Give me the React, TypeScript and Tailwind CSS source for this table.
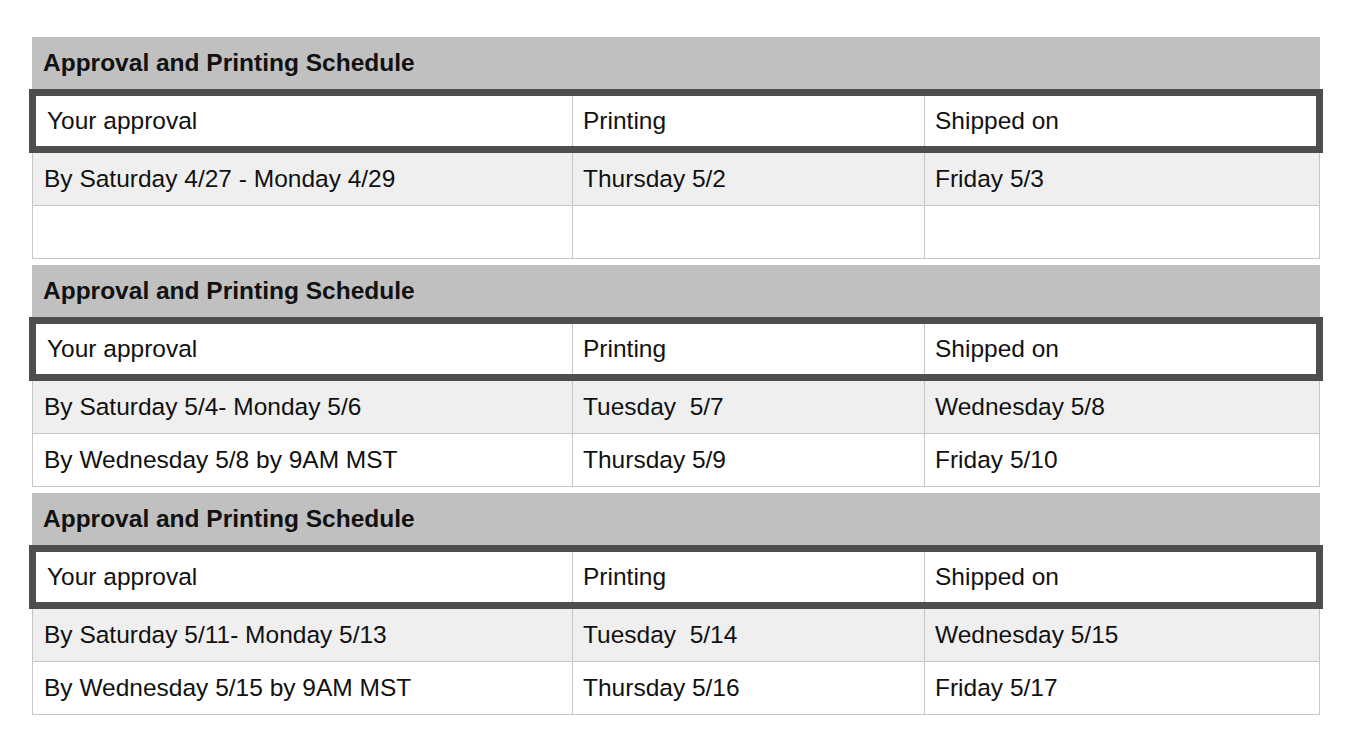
const tables: string[][][] = [
  [
    ["By Saturday 4/27 - Monday 4/29", "Thursday 5/2", "Friday 5/3"],
    ["", "", ""],
  ],
  [
    ["By Saturday 5/4- Monday 5/6", "Tuesday  5/7", "Wednesday 5/8"],
    ["By Wednesday 5/8 by 9AM MST", "Thursday 5/9", "Friday 5/10"],
  ],
  [
    ["By Saturday 5/11- Monday 5/13", "Tuesday  5/14", "Wednesday 5/15"],
    ["By Wednesday 5/15 by 9AM MST", "Thursday 5/16", "Friday 5/17"],
  ],
];

function Schedule({ rows }: { rows: string[][] }) {
  return (
    <div className="w-[1288px]">
      <div className="flex h-[52px] items-center bg-[#bfc0bf] px-[11px] font-bold">
        Approval and Printing Schedule
      </div>
      {/* column heads, framed by the thick dark border */}
      <div className="relative z-10 -mx-[3px] flex h-[64px] border-[7px] border-[#4e4e4e] bg-white">
        <div className="flex w-[536px] flex-none items-center pl-[11px]">Your approval</div>
        <div className="flex w-[352px] flex-none items-center border-l border-[#c6c6c6] pl-[10px]">Printing</div>
        <div className="flex flex-1 items-center border-l border-[#c6c6c6] pl-[10px]">Shipped on</div>
      </div>
      {rows.map((r, i) => (
        <div
          key={i}
          className={
            "flex h-[53px] border-x border-b border-[#c6c6c6] " + (i === 0 ? "bg-[#efefef]" : "bg-white")
          }
        >
          <div className="flex w-[539px] flex-none items-center whitespace-pre pl-[11px]">{r[0]}</div>
          <div className="flex w-[352px] flex-none items-center whitespace-pre border-l border-[#c6c6c6] pl-[10px]">{r[1]}</div>
          <div className="flex flex-1 items-center whitespace-pre border-l border-[#c6c6c6] pl-[10px]">{r[2]}</div>
        </div>
      ))}
    </div>
  );
}

export default function App() {
  return (
    <div className="h-[740px] w-[1370px] bg-white pl-[32px] pt-[37px] font-['Liberation_Sans',Arial,sans-serif] text-[24.5px] leading-none text-[#111]">
      <div className="flex flex-col gap-[6px]">
        {tables.map((rows, i) => (
          <Schedule key={i} rows={rows} />
        ))}
      </div>
    </div>
  );
}
